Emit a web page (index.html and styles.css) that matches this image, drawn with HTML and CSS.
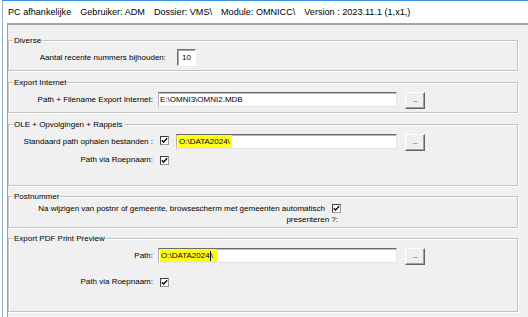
FILE: index.html
```html
<!DOCTYPE html>
<html>
<head>
<meta charset="utf-8">
<link rel="stylesheet" href="styles.css">
</head>
<body>
<div class="frame">
  <div class="titlebar">
    <span>PC afhankelijke</span>
    <span>Gebruiker: ADM</span>
    <span>Dossier: VMS\</span>
    <span>Module: OMNICC\</span>
    <span>Version : 2023.11.1 (1,x1,)</span>
  </div>
  <div class="panel">
    <section class="group g1">
      <div class="legend">Diverse</div>
      <div class="row row-first-g1">
        <span class="lbl lbl-wide">Aantal recente nummers bijhouden:</span>
        <span class="numbox">10</span>
      </div>
    </section>

    <section class="group g2">
      <div class="legend">Export Internet</div>
      <div class="row row-first">
        <span class="lbl">Path + Filename Export Internet:</span>
        <span class="input input-long">E:\OMNI3\OMNI2.MDB</span>
        <span class="btn">...</span>
      </div>
    </section>

    <section class="group g3">
      <div class="legend">OLE + Opvolgingen + Rappels</div>
      <div class="row row-first">
        <span class="lbl">Standaard path ophalen bestanden :</span>
        <span class="check check-in-row"><svg width="7" height="7" viewBox="0 0 7 7"><path d="M0.8 3.2 L2.6 5 L6.2 1.2" fill="none" stroke="#000" stroke-width="1.3"/></svg></span>
        <span class="input input-short"><span class="hl">O:\DATA2024\</span></span>
        <span class="btn">...</span>
      </div>
      <div class="row row-check row-second-g3">
        <span class="lbl lbl-short">Path via Roepnaam:</span>
        <span class="check"><svg width="7" height="7" viewBox="0 0 7 7"><path d="M0.8 3.2 L2.6 5 L6.2 1.2" fill="none" stroke="#000" stroke-width="1.3"/></svg></span>
      </div>
    </section>

    <section class="group g4">
      <div class="legend">Postnummer</div>
      <div class="multi">
        <div class="multi-line">
          <span>Na wijzigen van postnr of gemeente, browsescherm met gemeenten automatisch</span>
          <span class="check check-multi"><svg width="7" height="7" viewBox="0 0 7 7"><path d="M0.8 3.2 L2.6 5 L6.2 1.2" fill="none" stroke="#000" stroke-width="1.3"/></svg></span>
        </div>
        <div class="multi-line2">presenteren ?:</div>
      </div>
    </section>

    <section class="group g5">
      <div class="legend">Export PDF Print Preview</div>
      <div class="row row-first">
        <span class="lbl">Path:</span>
        <span class="input input-long"><span class="hl hl-flush">O:\DATA2024<span class="caret"></span>\</span></span>
        <span class="btn">...</span>
      </div>
      <div class="row row-check row-second-g5">
        <span class="lbl lbl-short">Path via Roepnaam:</span>
        <span class="check"><svg width="7" height="7" viewBox="0 0 7 7"><path d="M0.8 3.2 L2.6 5 L6.2 1.2" fill="none" stroke="#000" stroke-width="1.3"/></svg></span>
      </div>
    </section>
  </div>
</div>
</body>
</html>
```

FILE: styles.css
```css
html, body {
  margin: 0;
  padding: 0;
  background: #ffffff;
}

body {
  width: 528px;
  height: 317px;
  overflow: hidden;
  font-family: "Liberation Sans", Arial, sans-serif;
  font-size: 8px;
  color: #000000;
}

.frame {
  height: 317px;
  box-sizing: border-box;
  margin-left: 2px;
  border-top: 1px solid #3a8ee0;
  border-left: 1px solid #8db3dc;
  display: flex;
  flex-direction: column;
}

.titlebar {
  height: 22px;
  flex: none;
  display: flex;
  align-items: center;
  gap: 9px;
  padding-left: 5px;
  font-size: 9.1px;
  color: #000;
  white-space: nowrap;
}

.panel {
  flex: 1;
  margin-left: 4px;
  background: #f0f0f0;
  border-top: 2px solid #a3a3a3;
  border-left: 1px solid #a0a0a0;
  display: flex;
  flex-direction: column;
}

.group {
  box-sizing: border-box;
  margin-right: 10px;
  border: 1px solid #c2c2c2;
  box-shadow: inset 1px 1px 0 #ffffff, 1px 1px 0 #ffffff;
  display: flex;
  flex-direction: column;
  flex: none;
}

.g1 { margin-top: 15px; height: 31px; }
.g2 { margin-top: 11px; height: 31px; }
.g3 { margin-top: 11px; height: 62px; }
.g4 { margin-top: 10px; height: 32px; }
.g5 { margin-top: 10px; height: 74px; }

.legend {
  align-self: flex-start;
  height: 11px;
  line-height: 11px;
  margin: -6px 0 -5px 4px;
  padding: 0 1px;
  background: #f0f0f0;
  white-space: nowrap;
}

.row {
  display: flex;
  align-items: flex-start;
  white-space: nowrap;
}

.row-first-g1 { margin-top: 8px; }
.row-first { margin-top: 9px; }

.row-check { align-items: center; }
.row-second-g3 { margin-top: 4px; }
.row-second-g5 { margin-top: 12px; }

.lbl {
  width: 144px;
  flex: none;
  text-align: right;
  line-height: 15px;
  margin-right: 5px;
}

.lbl-wide {
  width: 157px;
  line-height: 17px;
  margin-right: 11px;
}

.lbl-short {
  line-height: 10px;
  margin-right: 7px;
}

.g3 .row-first .lbl { margin-right: 7px; }

.numbox {
  box-sizing: border-box;
  width: 19px;
  height: 17px;
  line-height: 15px;
  padding-left: 4px;
  background: #ffffff;
  border-top: 1px solid #6f6f6f;
  border-left: 1px solid #6f6f6f;
  border-right: 1px solid #ffffff;
  border-bottom: 1px solid #ffffff;
  box-shadow: inset 1px 1px 0 #a8a8a8;
}

.input {
  box-sizing: border-box;
  height: 15px;
  line-height: 13px;
  background: #ffffff;
  border-top: 1px solid #6a6a6a;
  border-left: 1px solid #b4b4b4;
  border-right: 1px solid #e4e4e4;
  border-bottom: 1px solid #e4e4e4;
  box-shadow: inset 0 1px 0 #b9b9b9;
  padding-left: 1px;
  margin-right: 8px;
  flex: none;
  overflow: hidden;
  display: flex;
  align-items: stretch;
}

.input-long { width: 239px; }
.input-short { width: 221px; }

.hl {
  background: #ffff1a;
  padding: 0 2px 0 1px;
  display: flex;
  align-items: center;
}

.hl-flush { padding: 0 4px 0 1px; }

.caret {
  display: inline-block;
  width: 1px;
  height: 10px;
  background: #000;
}

.btn {
  box-sizing: border-box;
  width: 20px;
  height: 17px;
  flex: none;
  background: #efefef;
  border-top: 1px solid #ffffff;
  border-left: 1px solid #ffffff;
  border-right: 1px solid #646464;
  border-bottom: 1px solid #646464;
  box-shadow: inset -1px -1px 0 #a0a0a0;
  text-align: center;
  line-height: 13px;
  color: #3b2f7a;
  font-size: 8px;
  letter-spacing: -0.5px;
}

.check {
  box-sizing: border-box;
  width: 9px;
  height: 9px;
  flex: none;
  background: #ffffff;
  border-top: 1px solid #404040;
  border-left: 1px solid #404040;
  border-right: 1px solid #9a9a9a;
  border-bottom: 1px solid #9a9a9a;
  display: flex;
  align-items: center;
  justify-content: center;
}

.check svg { display: block; }

.check-in-row {
  margin-top: 2px;
  margin-left: 0;
  margin-right: 7px;
}

.multi {
  margin-top: 6px;
  width: 333px;
  display: flex;
  flex-direction: column;
  align-items: flex-end;
  white-space: nowrap;
}

.multi-line {
  display: flex;
  align-items: center;
  line-height: 11px;
}

.check-multi { margin-left: 7px; margin-right: 1px; }

.multi-line2 {
  line-height: 11px;
  padding-right: 4px;
}
```
